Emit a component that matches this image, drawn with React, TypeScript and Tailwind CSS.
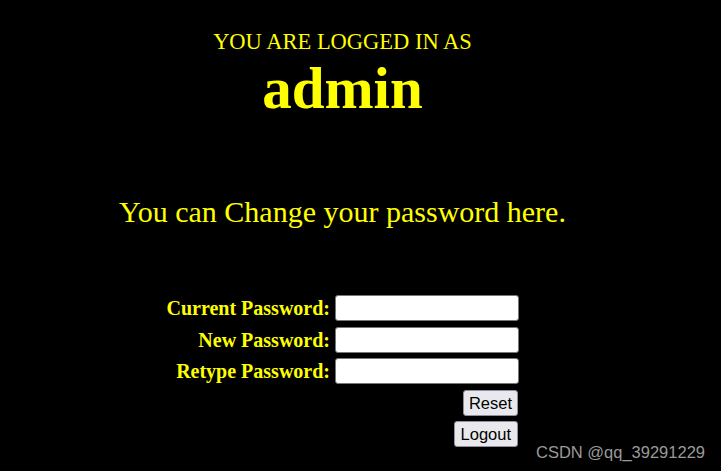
import React from 'react';

const serif = "font-['Liberation_Serif','Times_New_Roman',serif]";

function Field({ label }: { label: string }) {
  return (
    <>
      <label className={`${serif} text-right text-[20px] font-bold leading-[26px] text-[#ffff00] pr-[5px]`}>
        {label}
      </label>
      <input
        type="password"
        className="h-[26px] w-[184px] rounded-[3px] border border-[#767676] bg-white px-1 outline-none"
      />
    </>
  );
}

export default function App() {
  return (
    <div className="relative h-[471px] w-full overflow-hidden bg-black">
      <div className="w-[685px] pt-[29px] text-center">
        <div className={`${serif} text-[22.5px] leading-[26px] text-[#ffff00]`}>YOU ARE LOGGED IN AS</div>
        <div className={`${serif} mt-[3px] text-[59px] font-bold leading-[60px] text-[#ffff00]`}>admin</div>
        <div className={`${serif} mt-[77px] text-[30px] leading-[34px] text-[#ffff00]`}>
          You can Change your password here.
        </div>
      </div>

      <form className="mt-[66px] flex w-[518px] flex-col items-end">
        <div className="mr-[-1px] grid grid-cols-[auto_184px] items-center gap-y-[5.5px]">
          <Field label="Current Password:" />
          <Field label="New Password:" />
          <Field label="Retype Password:" />
        </div>
        <button
          type="reset"
          className="mt-[6px] h-[26px] rounded-[3px] border border-[#8f8f9d] bg-[#e9e9ed] px-[5px] font-['Liberation_Sans',Arial,sans-serif] text-[16.5px] leading-none text-black"
        >
          Reset
        </button>
        <button
          type="button"
          className="mt-[5px] h-[26px] rounded-[3px] border border-[#8f8f9d] bg-[#e9e9ed] px-[6px] font-['Liberation_Sans',Arial,sans-serif] text-[16.5px] leading-none text-black"
        >
          Logout
        </button>
      </form>

      <div className="absolute bottom-[6px] right-[16px] font-['Liberation_Sans',Arial,sans-serif] text-[16.5px] leading-[1.5] text-[#9a9a9a]">
        CSDN @qq_39291229
      </div>
    </div>
  );
}
